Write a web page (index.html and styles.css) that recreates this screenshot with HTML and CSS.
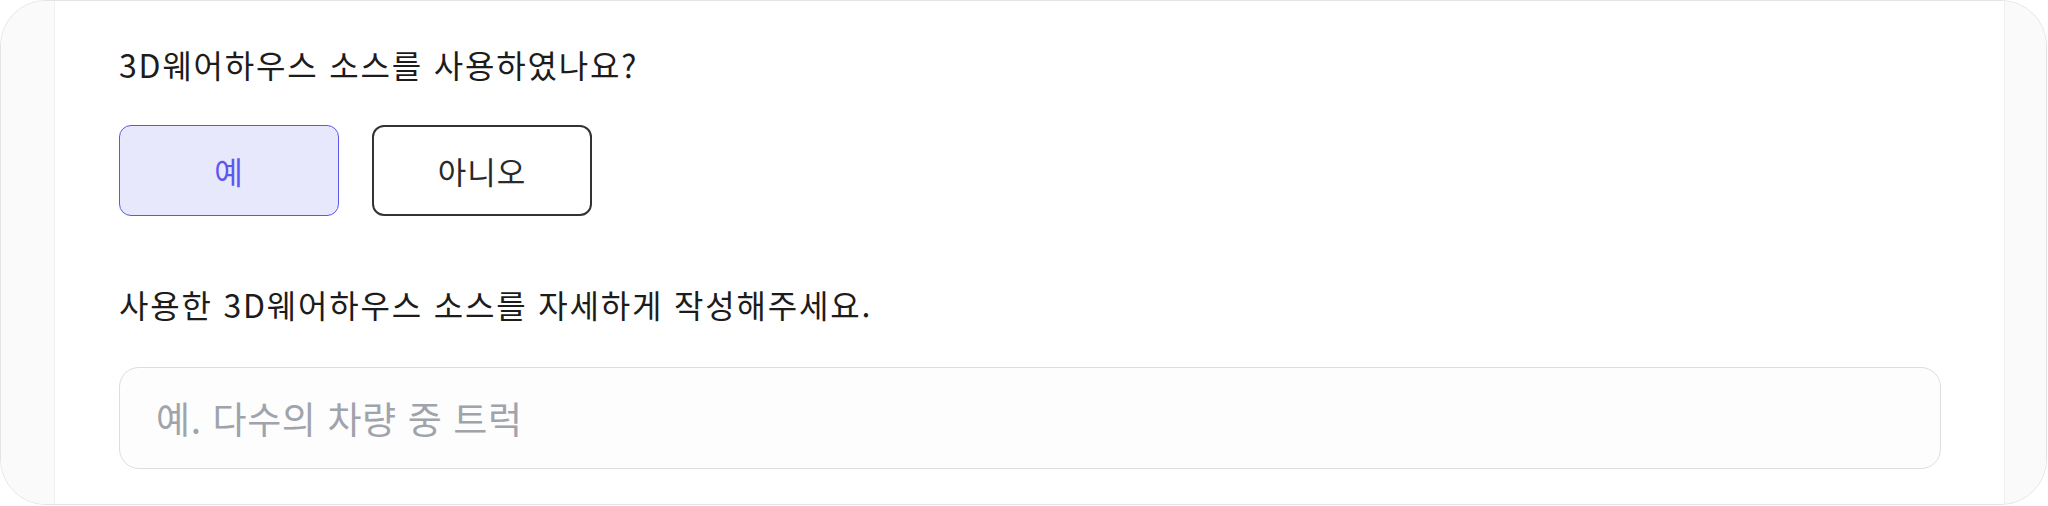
FILE: index.html
```html
<!DOCTYPE html>
<html lang="ko">
<head>
  <meta charset="UTF-8">
  <title>3D웨어하우스 소스</title>
  <meta name="viewport" content="width=device-width, initial-scale=1.0">
  <link rel="stylesheet" href="styles.css">
</head>
<body>
  <div class="frame">
    <div class="side"></div>
    <div class="panel">
      <p class="question">3D웨어하우스 소스를 사용하였나요?</p>
      <div class="choices">
        <button class="choice active">예</button>
        <button class="choice">아니오</button>
      </div>
      <p class="question second">사용한 3D웨어하우스 소스를 자세하게 작성해주세요.</p>
      <input type="text" class="answer" placeholder="예. 다수의 차량 중 트럭">
    </div>
    <div class="side"></div>
  </div>
</body>
</html>
```

FILE: styles.css
```css
:root {
  --text: #1c1c1c;
  --line: #e4e4e4;
  --side: #fafafa;
  --accent: #5b57f0;
  --accent-bg: #e8e8fd;
  --placeholder: #9fa4ac;
}

* {
  box-sizing: border-box;
}

body {
  margin: 0;
  font-family: "Noto Sans CJK KR", "Noto Sans", sans-serif;
  color: var(--text);
  background: #ffffff;
}

.frame {
  display: grid;
  grid-template-columns: 53px 1fr 41px;
  width: 2047px;
  height: 505px;
  border: 1.5px solid var(--line);
  border-radius: 46px;
  overflow: hidden;
  background: var(--side);
}

.side {
  background: var(--side);
}

.panel {
  background: #ffffff;
  border-left: 1px solid #f0f0f0;
  border-right: 1px solid #f0f0f0;
  padding: 43px 63px 0 64px;
}

.question {
  margin: 0;
  font-size: 32px;
  line-height: 40px;
  letter-spacing: 1.8px;
}

.second {
  margin-top: 68px;
}

.choices {
  display: flex;
  gap: 33px;
  margin-top: 41px;
}

.choice {
  width: 220px;
  height: 91px;
  font-family: inherit;
  font-size: 31px;
  letter-spacing: 1px;
  color: #2a2a2a;
  background: #ffffff;
  border: 2px solid #333333;
  border-radius: 12px;
  cursor: pointer;
}

.choice.active {
  color: var(--accent);
  background: var(--accent-bg);
  border: 1.5px solid var(--accent);
}

.answer {
  display: block;
  width: 100%;
  height: 102px;
  margin-top: 43px;
  padding: 0 36px;
  font-family: inherit;
  font-size: 37px;
  letter-spacing: 0.6px;
  color: var(--text);
  background: #fdfdfd;
  border: 1.5px solid #dddddd;
  border-radius: 20px;
  outline: none;
}

.answer::placeholder {
  color: var(--placeholder);
}
```
